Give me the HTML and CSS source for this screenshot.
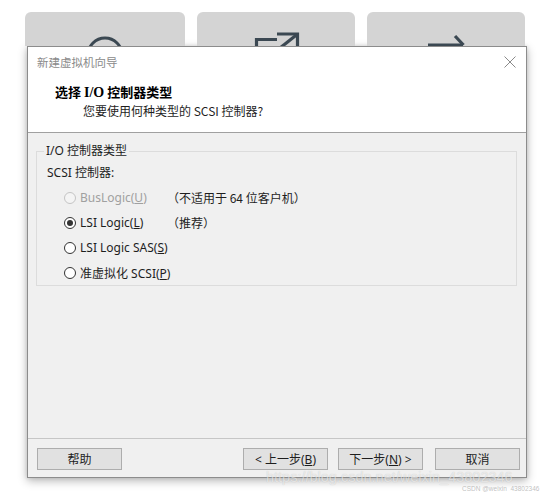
FILE: index.html
```html
<!DOCTYPE html>
<html lang="zh-CN">
<head>
<meta charset="utf-8">
<title>新建虚拟机向导</title>
<link rel="stylesheet" href="styles.css">
</head>
<body>
<div class="screen">
  <div class="tiles">
    <div class="tile tile-wide">
      <svg class="tile-icon" width="160" height="34" viewBox="0 0 160 34"><circle cx="80" cy="43" r="17" fill="none" stroke="#3b4852" stroke-width="3"/></svg>
    </div>
    <div class="tile">
      <svg class="tile-icon" width="158" height="34" viewBox="0 0 158 34" fill="none" stroke="#3b4852" stroke-width="3.2"><path d="M59.5 40V27.5H80"/><path d="M80 22H100.5V40"/><path d="M83 36L100 22.5"/></svg>
    </div>
    <div class="tile">
      <svg class="tile-icon" width="158" height="34" viewBox="0 0 158 34" fill="none" stroke="#3b4852" stroke-width="3.2"><path d="M61 33H96"/><path d="M88 24L96.5 33"/></svg>
    </div>
  </div>

  <div class="dialog">
    <div class="titlebar">
      <span class="wtitle">新建虚拟机向导</span>
      <svg class="close" width="12" height="12" viewBox="0 0 12 12"><path d="M0.5 0.5L11.5 11.5M11.5 0.5L0.5 11.5" stroke="#8a8a8a" stroke-width="1"/></svg>
    </div>
    <div class="header">
      <div class="htitle">选择 <span class="latin">I/O</span> 控制器类型</div>
      <div class="hsub">您要使用何种类型的 SCSI 控制器?</div>
    </div>
    <div class="content">
      <fieldset class="group">
        <legend>I/O 控制器类型</legend>
        <div class="glabel">SCSI 控制器:</div>
        <div class="opt disabled"><span class="radio"></span><span class="otext">BusLogic(<u>U</u>)</span><span class="note">（不适用于 64 位客户机）</span></div>
        <div class="opt"><span class="radio checked"></span><span class="otext">LSI Logic(<u>L</u>)</span><span class="note">（推荐）</span></div>
        <div class="opt"><span class="radio"></span><span class="otext">LSI Logic SAS(<u>S</u>)</span></div>
        <div class="opt"><span class="radio"></span><span class="otext">准虚拟化 SCSI(<u>P</u>)</span></div>
      </fieldset>
    </div>
    <div class="footer">
      <button class="btn">帮助</button>
      <div class="spacer"></div>
      <button class="btn">&lt; 上一步(<u>B</u>)</button>
      <button class="btn btn-next">下一步(<u>N</u>) &gt;</button>
      <button class="btn btn-cancel">取消</button>
    </div>
  </div>

  <div class="watermark">https://blog.csdn.net/weixin_43802346</div>
  <div class="watermark-small">CSDN @weixin_43802346</div>
</div>
</body>
</html>
```

FILE: styles.css
```css
* { box-sizing: border-box; }

html, body {
  margin: 0;
  padding: 0;
  background: #ffffff;
}

body {
  font-family: "Noto Sans", "Noto Sans CJK SC", sans-serif;
  font-size: 12px;
  color: #1e1e1e;
}

.screen {
  position: relative;
  width: 547px;
  height: 492px;
  overflow: hidden;
}

/* background tiles */
.tiles {
  display: flex;
  gap: 12px;
  height: 46px;
  padding: 12px 0 0 25px;
  overflow: hidden;
}

.tile {
  width: 158px;
  height: 60px;
  flex: none;
  background: #d4d4d4;
  border-radius: 6px;
}

.tile-wide { width: 160px; }

.tile-icon { display: block; }

/* dialog */
.dialog {
  width: 500px;
  height: 432px;
  margin-left: 27px;
  display: flex;
  flex-direction: column;
  background: #f0f0f0;
  border: 1px solid #8c8c8c;
  box-shadow: 0 3px 9px rgba(0, 0, 0, 0.28), 0 0 4px rgba(0, 0, 0, 0.12);
}

.titlebar {
  height: 30px;
  flex: none;
  display: flex;
  align-items: center;
  justify-content: space-between;
  padding: 0 10px 0 9px;
  background: #ffffff;
}

.wtitle {
  font-family: "Noto Sans CJK SC", sans-serif;
  font-size: 11.5px;
  color: #8a8a8a;
  line-height: 16px;
}

.close { display: block; }

.header {
  height: 56px;
  flex: none;
  padding: 6px 0 0 27px;
  background: #ffffff;
  border-bottom: 1px solid #a0a0a0;
}

.htitle {
  font-family: "Noto Sans CJK SC", sans-serif;
  font-weight: 700;
  font-size: 13px;
  line-height: 18px;
  color: #000;
}

.htitle .latin {
  font-family: "Liberation Serif", serif;
  font-size: 14px;
}

.hsub {
  font-family: "Noto Sans CJK SC", sans-serif;
  font-size: 12px;
  line-height: 18px;
  margin-left: 28px;
  color: #1e1e1e;
}

.content {
  flex: 1;
  padding: 10px 9px 0 8px;
}

.group {
  margin: 0;
  padding: 0 0 0 7px;
  height: 143px;
  border: 1px solid #dcdcdc;
}

.group legend {
  padding: 0 2px;
  line-height: 16px;
  font-size: 12px;
  color: #1e1e1e;
}

.glabel {
  margin: 5px 0 0 3px;
  line-height: 18px;
}

.opt {
  display: flex;
  align-items: center;
  height: 25px;
  padding-left: 20px;
}

.glabel + .opt { margin-top: 3px; }

.radio {
  width: 12px;
  height: 12px;
  flex: none;
  border: 1px solid #333333;
  border-radius: 50%;
  background: #ffffff;
  display: flex;
  align-items: center;
  justify-content: center;
}

.radio.checked::after {
  content: "";
  width: 6px;
  height: 6px;
  border-radius: 50%;
  background: #333333;
}

.otext {
  margin-left: 4px;
  width: 87px;
  white-space: nowrap;
}

.note {
  font-family: "Noto Sans CJK SC", sans-serif;
  white-space: nowrap;
}

.opt.disabled .radio {
  border-color: #c4c4c4;
  background: #f4f4f4;
}

.opt.disabled .otext { color: #a0a0a0; }

.footer {
  height: 39px;
  flex: none;
  display: flex;
  align-items: flex-start;
  padding: 9px 6px 0 9px;
  border-top: 1px solid #c6c6c6;
}

.spacer { flex: 1; }

.btn {
  width: 85px;
  height: 22px;
  padding: 0;
  font-family: "Noto Sans", "Noto Sans CJK SC", sans-serif;
  font-size: 12px;
  color: #1e1e1e;
  background: #e1e1e1;
  border: 1px solid #adadad;
  border-radius: 0;
}

.btn-next { margin-left: 10px; }
.btn-cancel { margin-left: 12px; }

/* faint watermark over the screenshot */
.watermark {
  position: absolute;
  left: 266px;
  top: 470px;
  font-family: "Liberation Sans", sans-serif;
  font-size: 14.5px;
  line-height: 15px;
  color: rgba(255, 255, 255, 0.6);
  text-shadow: 0 0 1px rgba(0, 0, 0, 0.2);
  white-space: nowrap;
}

.watermark-small {
  position: absolute;
  left: 462px;
  top: 485px;
  font-family: "Liberation Sans", sans-serif;
  font-size: 6.5px;
  line-height: 7px;
  color: rgba(150, 150, 150, 0.6);
  white-space: nowrap;
}
```
